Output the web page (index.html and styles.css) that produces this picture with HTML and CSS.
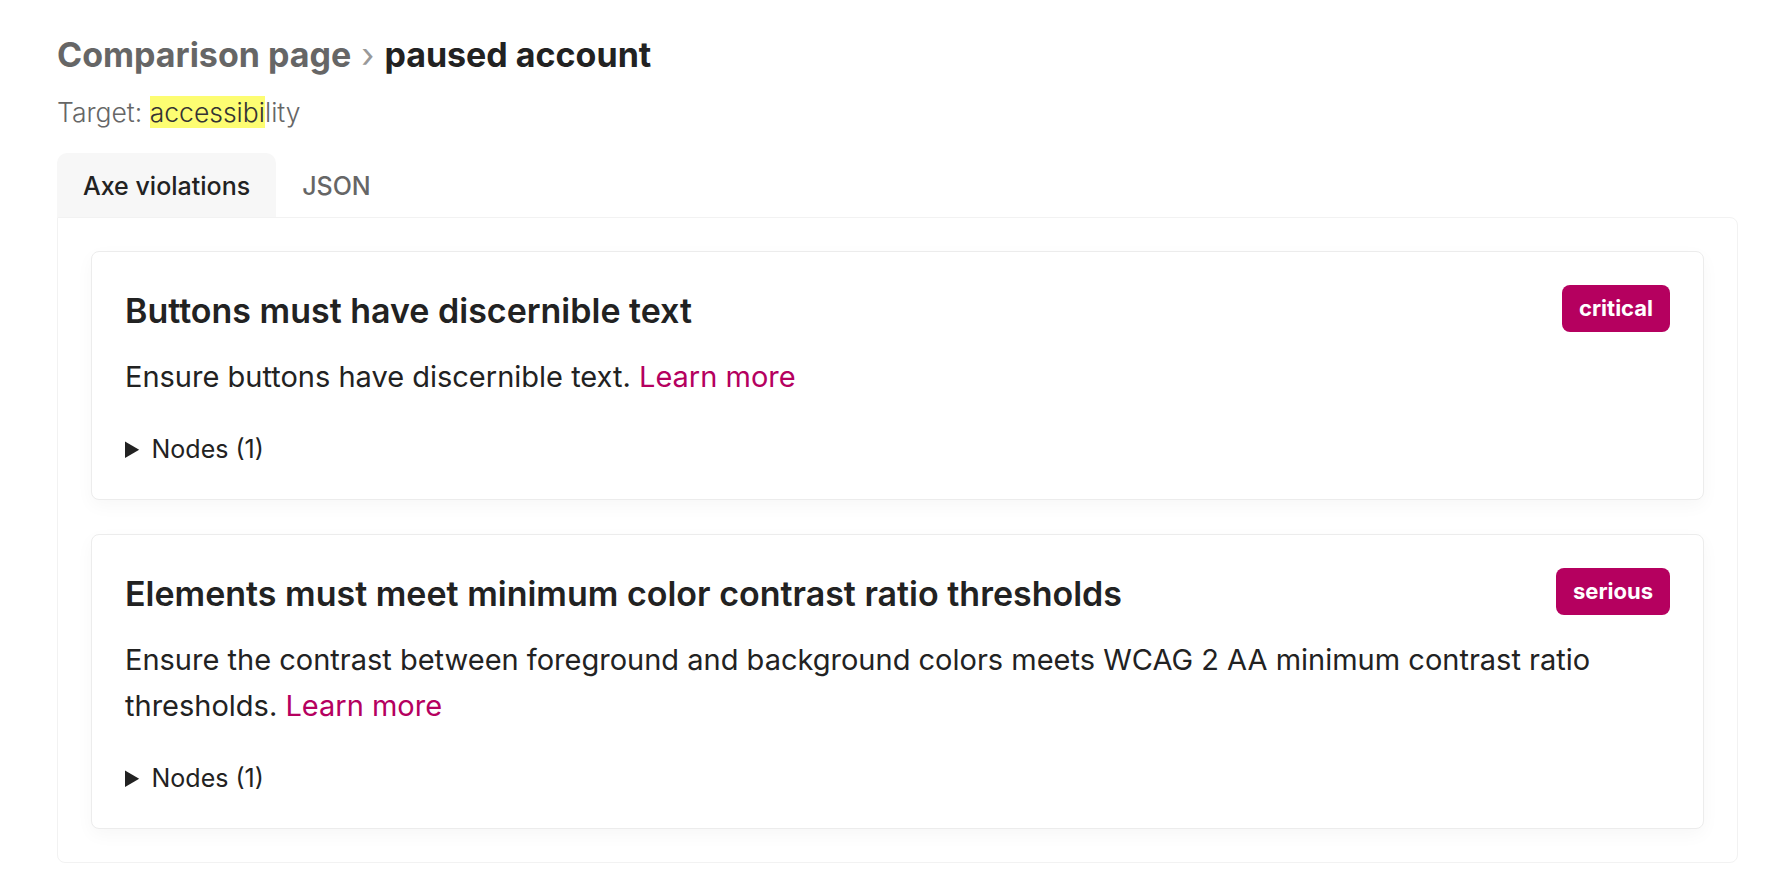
FILE: index.html
```html
<!DOCTYPE html>
<html lang="en">
  <head>
    <meta charset="UTF-8" />
    <meta name="viewport" content="width=device-width, initial-scale=1.0" />
    <title>Comparison page - paused account</title>
    <link rel="stylesheet" href="styles.css">
  </head>
  <body>
    <div class="page">
      <h1 class="crumbs">
        <span class="crumb-parent">Comparison page</span>
        <span class="crumb-sep">›</span>
        <span class="crumb-current">paused account</span>
      </h1>
      <p class="target">Target: <mark>accessibi</mark>lity</p>

      <div class="tabs">
        <div class="tab-list">
          <button class="tab active">Axe violations</button>
          <button class="tab">JSON</button>
        </div>

        <div class="tab-panel">
          <!-- Violation cards -->
          <div class="violation">
            <div class="violation-head">
              <h2>Buttons must have discernible text</h2>
              <span class="impact">critical</span>
            </div>
            <p class="violation-desc">
              Ensure buttons have discernible text.
              <a href="#">Learn more</a>
            </p>
            <details class="nodes">
              <summary>Nodes (1)</summary>
            </details>
          </div>

          <div class="violation">
            <div class="violation-head">
              <h2>Elements must meet minimum color contrast ratio thresholds</h2>
              <span class="impact">serious</span>
            </div>
            <p class="violation-desc">
              Ensure the contrast between foreground and background colors meets WCAG 2 AA minimum contrast ratio thresholds.
              <a href="#">Learn more</a>
            </p>
            <details class="nodes">
              <summary>Nodes (1)</summary>
            </details>
          </div>
        </div>
      </div>
    </div>
  </body>
</html>
```

FILE: styles.css
```css
:root {
  --text: #222222;
  --muted: #666666;
  --faint: #999999;
  --accent: #b5005f;
  --border: #ececec;
  --tab-bg: #f7f7f7;
  --highlight: #fdfd72;
  --white: #ffffff;
}

* {
  margin: 0;
  padding: 0;
  box-sizing: border-box;
}

body {
  background: var(--white);
  color: var(--text);
  font-family: "Inter", "Noto Sans", sans-serif;
}

.page {
  padding: 35px 38px 0 57px;
}

/* Heading */
.crumbs {
  font-size: 34px;
  line-height: 40px;
  font-weight: 700;
}

.crumb-parent {
  color: var(--muted);
}

.crumb-sep {
  color: var(--faint);
  font-weight: 400;
  margin: 0 2px;
}

.crumb-current {
  color: var(--text);
}

.target {
  margin-top: 19px;
  font-size: 26.5px;
  line-height: 36px;
  font-weight: 300;
  color: var(--muted);
}

.target mark {
  background: var(--highlight);
  color: #333333;
}

/* Tabs */
.tabs {
  margin-top: 23px;
}

.tab-list {
  display: flex;
}

.tab {
  border: none;
  background: none;
  font-family: inherit;
  font-size: 25px;
  font-weight: 500;
  line-height: 28px;
  padding: 19px 26px 17px;
  color: var(--muted);
  border-radius: 10px 10px 0 0;
  cursor: pointer;
}

.tab.active {
  background: var(--tab-bg);
  color: var(--text);
}

.tab-panel {
  border: 1px solid #f2f2f2;
  border-radius: 0 8px 8px 8px;
  padding: 33px;
  display: flex;
  flex-direction: column;
  gap: 34px;
}

/* Violation cards */
.violation {
  border: 1px solid var(--border);
  border-radius: 8px;
  padding: 33px;
  background: var(--white);
  box-shadow: 0 6px 18px rgba(0, 0, 0, 0.035);
}

.violation-head {
  display: flex;
  justify-content: space-between;
  align-items: flex-start;
  gap: 24px;
}

.violation-head h2 {
  font-size: 34px;
  line-height: 51px;
  font-weight: 600;
  color: var(--text);
}

.impact {
  background: var(--accent);
  color: var(--white);
  font-size: 22px;
  font-weight: 700;
  line-height: 47px;
  padding: 0 17px;
  border-radius: 8px;
}

.violation-desc {
  margin-top: 18px;
  font-size: 29px;
  line-height: 46px;
  color: var(--text);
}

.violation-desc a {
  color: var(--accent);
  text-decoration: none;
}

.nodes {
  margin-top: 32px;
  font-size: 25px;
  line-height: 34px;
}

.nodes summary {
  cursor: pointer;
}
```
